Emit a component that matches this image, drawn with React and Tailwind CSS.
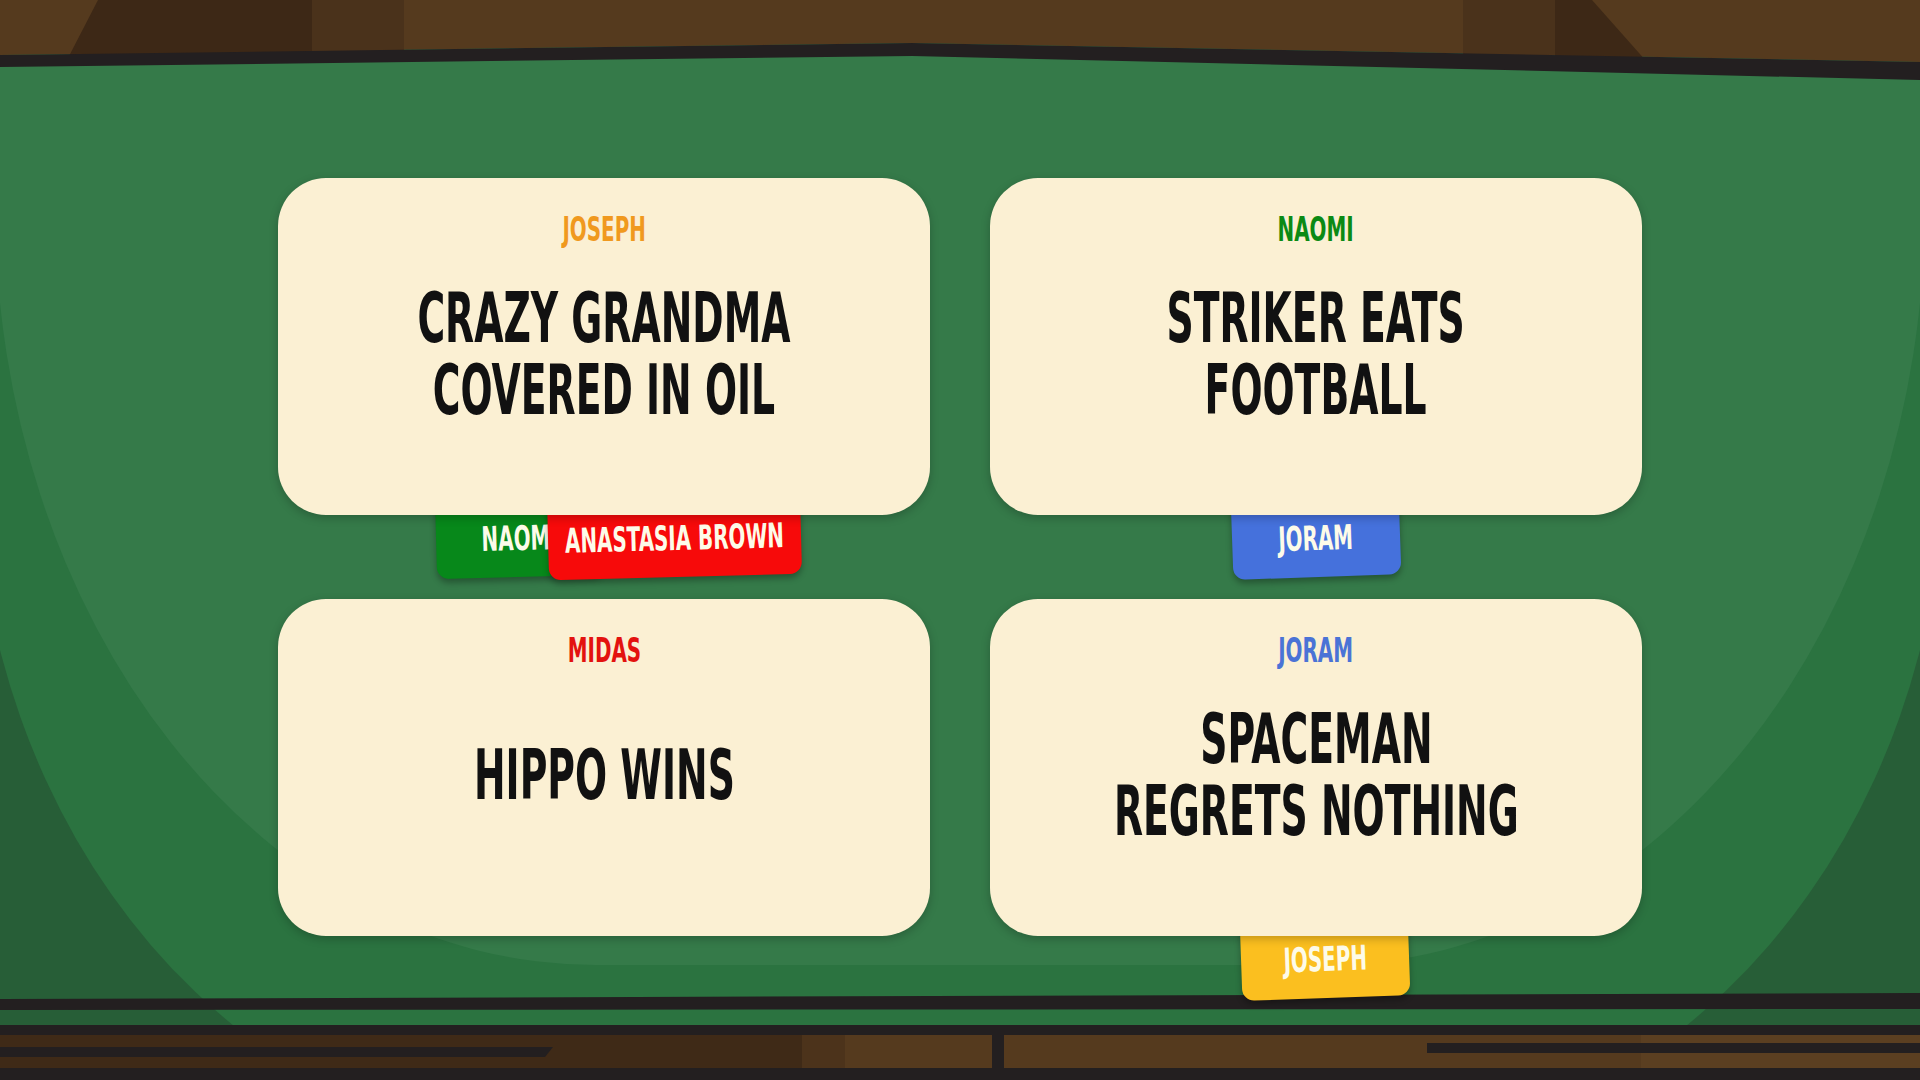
import React from "react";

// condensed headline face: condensed sans squeezed further with scale-x
const narrow =
  "font-['DejaVu_Sans_Condensed','Liberation_Sans',sans-serif] font-bold";

const Tag = ({ name, bg, className = "" }) => (
  <div
    className={`flex h-[82px] shrink-0 justify-center rounded-b-[12px] rounded-t-[6px] pt-[26px] shadow-[0_4px_6px_rgba(0,0,0,0.3)] ${bg} ${className}`}
  >
    <span
      className={`${narrow} inline-block scale-x-[0.65] whitespace-nowrap text-[34px] leading-[34px] text-[#fdfbe9]`}
    >
      {name}
    </span>
  </div>
);

const Card = ({ author, authorColor, lines, children }) => (
  <div className="relative">
    <div className="relative z-10 flex h-[337px] flex-col items-center rounded-[48px] bg-[#fbf0d3] pt-[34px] pb-[54px] shadow-[0_3px_10px_rgba(0,0,0,0.22)]">
      <div
        className={`${narrow} inline-block scale-x-[0.65] text-[34px] leading-[34px] ${authorColor}`}
      >
        {author}
      </div>
      <div className="flex flex-1 items-center">
        <div
          className={`${narrow} scale-x-[0.6] whitespace-nowrap text-center text-[70px] leading-[72px] text-[#111111]`}
        >
          {lines.map((l) => (
            <div key={l}>{l}</div>
          ))}
        </div>
      </div>
    </div>
    <div className="absolute inset-x-0 top-[calc(100%-20px)] z-0 flex justify-center">
      {children}
    </div>
  </div>
);

const TopWall = () => (
  <svg
    className="absolute left-0 top-0"
    width="1920"
    height="90"
    viewBox="0 0 1920 90"
  >
    <polygon points="0,0 1920,0 1920,62 912,43 0,55" fill="#553a1e" />
    <polygon points="98,0 312,0 312,60 67,60" fill="#3d2816" />
    <rect x="312" y="0" width="92" height="52" fill="#4a321b" />
    <rect x="1463" y="0" width="92" height="55" fill="#4a321b" />
    <polygon points="1555,0 1592,0 1647,62 1555,62" fill="#3d2816" />
    <polygon
      points="0,55 912,43 1920,62 1920,80 912,56 0,67"
      fill="#231f20"
    />
  </svg>
);

const BottomRail = () => (
  <svg
    className="absolute bottom-0 left-0"
    width="1920"
    height="90"
    viewBox="0 0 1920 90"
  >
    <polygon points="0,9 1920,3 1920,19 0,20" fill="#231f20" />
    <rect x="0" y="35" width="1920" height="55" fill="#231f20" />
    <rect x="0" y="45" width="802" height="33" fill="#3f2a17" />
    <rect x="802" y="45" width="43" height="33" fill="#4c331b" />
    <rect x="845" y="45" width="147" height="33" fill="#553a1e" />
    <rect x="1004" y="45" width="637" height="33" fill="#553a1e" />
    <rect x="1641" y="45" width="279" height="33" fill="#5b3f21" />
    <polygon points="0,57 553,57 545,67 0,67" fill="#231f20" />
    <rect x="1427" y="53" width="493" height="10" fill="#231f20" />
  </svg>
);

export default function App() {
  return (
    <div className="relative h-[1080px] w-[1920px] overflow-hidden bg-[#275e37]">
      {/* felt shading */}
      <div className="absolute -left-[25px] -right-[25px] -top-[100px] bottom-[-70px] rounded-bl-[600px_700px] rounded-br-[600px_700px] bg-[#2b7340]" />
      <div className="absolute -left-[5px] -right-[5px] -top-[100px] bottom-[115px] rounded-bl-[600px_760px] rounded-br-[600px_760px] bg-[#357a49]" />

      <TopWall />
      <BottomRail />

      <div className="relative grid grid-cols-[652px_652px] justify-center gap-x-[60px] gap-y-[84px] pt-[178px]">
        <Card
          author="JOSEPH"
          authorColor="text-[#f0991e]"
          lines={["CRAZY GRANDMA", "COVERED IN OIL"]}
        >
          <div className="flex translate-x-[14px]">
            <Tag name="NAOMI" bg="bg-[#07881a]" className="w-[168px] rotate-[-1.5deg]" />
            <Tag
              name="ANASTASIA BROWN"
              bg="bg-[#f70a0a]"
              className="-ml-[56px] w-[253px] rotate-[-1.5deg]"
            />
          </div>
        </Card>
        <Card
          author="NAOMI"
          authorColor="text-[#0b8a14]"
          lines={["STRIKER EATS", "FOOTBALL"]}
        >
          <Tag name="JORAM" bg="bg-[#4571dc]" className="w-[168px] rotate-[-2deg]" />
        </Card>
        <Card author="MIDAS" authorColor="text-[#e3120f]" lines={["HIPPO WINS"]} />
        <Card
          author="JORAM"
          authorColor="text-[#4a73d6]"
          lines={["SPACEMAN", "REGRETS NOTHING"]}
        >
          <Tag
            name="JOSEPH"
            bg="bg-[#fbbf1f]"
            className="w-[168px] translate-x-[9px] rotate-[-2deg]"
          />
        </Card>
      </div>
    </div>
  );
}
